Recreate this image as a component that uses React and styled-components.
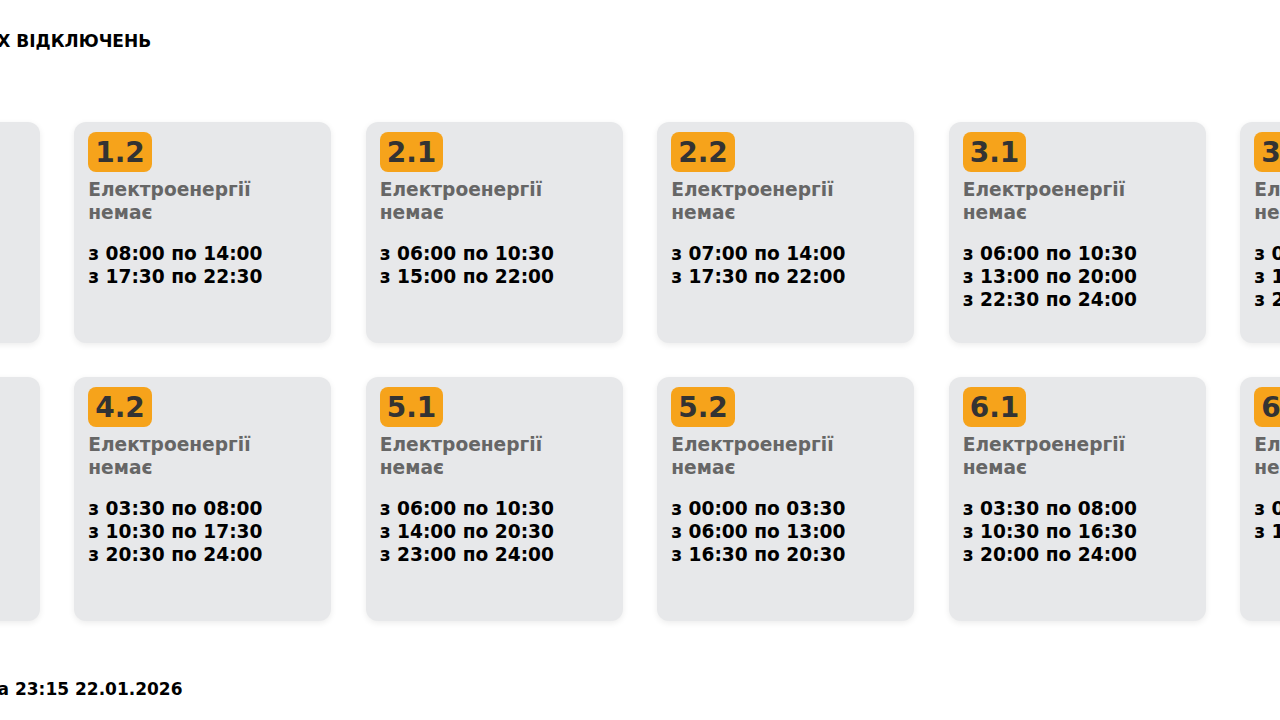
import React from "react";
import styled, { createGlobalStyle } from "styled-components";

const Global = createGlobalStyle`
  html, body { margin: 0; padding: 0; background: #ffffff; overflow-x: hidden; }
  body { font-family: "DejaVu Sans", "Noto Sans", sans-serif; color: #000; }
`;

const Page = styled.div`
  display: flex;
  justify-content: center;
  width: 100%;
  overflow: hidden;
`;

const Content = styled.main`
  flex-shrink: 0;
  width: 1714.5px;
  padding: 31px 0 20px;
  display: flex;
  flex-direction: column;
`;

const Title = styled.h1`
  margin: 0 0 70px;
  padding-left: 9px;
  font-size: 17px;
  line-height: 21px;
  font-weight: 700;
  text-transform: uppercase;
  color: #000;
`;

const Grid = styled.section`
  display: grid;
  grid-template-columns: repeat(6, 257px);
  column-gap: 34.5px;
  row-gap: 34px;
`;

const Card = styled.article`
  background: #e7e8ea;
  border-radius: 12px;
  box-shadow: 0 2px 6px rgba(0, 0, 0, 0.08);
  padding: 10px 14px 14px;
  display: flex;
  flex-direction: column;
  align-items: flex-start;
`;

const Badge = styled.div`
  background: #f6a31b;
  color: #333333;
  border-radius: 8px;
  padding: 1px 7px 0;
  height: 40px;
  box-sizing: border-box;
  line-height: 39px;
  font-size: 28px;
  font-weight: 700;
  margin-bottom: 6px;
`;

const Status = styled.p`
  margin: 0 0 18px;
  font-size: 18.6px;
  line-height: 23px;
  font-weight: 700;
  color: #666666;
`;

const Times = styled.div`
  margin-bottom: 18px;
  font-size: 18.6px;
  line-height: 23px;
  font-weight: 700;
  color: #000;
`;

const Footer = styled.p`
  margin: 58px 0 0;
  padding-left: 9px;
  font-size: 17px;
  line-height: 21px;
  font-weight: 700;
`;

const groups = [
  { id: "1.1", times: [["00:00", "03:30"], ["10:00", "14:00"], ["17:30", "21:00"]] },
  { id: "1.2", times: [["08:00", "14:00"], ["17:30", "22:30"]] },
  { id: "2.1", times: [["06:00", "10:30"], ["15:00", "22:00"]] },
  { id: "2.2", times: [["07:00", "14:00"], ["17:30", "22:00"]] },
  { id: "3.1", times: [["06:00", "10:30"], ["13:00", "20:00"], ["22:30", "24:00"]] },
  { id: "3.2", times: [["00:00", "03:30"], ["10:30", "17:00"], ["20:30", "24:00"]] },
  { id: "4.1", times: [["00:00", "03:30"], ["07:00", "10:30"], ["13:30", "17:30"], ["21:00", "24:00"]] },
  { id: "4.2", times: [["03:30", "08:00"], ["10:30", "17:30"], ["20:30", "24:00"]] },
  { id: "5.1", times: [["06:00", "10:30"], ["14:00", "20:30"], ["23:00", "24:00"]] },
  { id: "5.2", times: [["00:00", "03:30"], ["06:00", "13:00"], ["16:30", "20:30"]] },
  { id: "6.1", times: [["03:30", "08:00"], ["10:30", "16:30"], ["20:00", "24:00"]] },
  { id: "6.2", times: [["00:00", "06:30"], ["13:00", "20:00"]] },
];

export default function App() {
  return (
    <>
      <Global />
      <Page>
        <Content>
          <Title>Графік погодинних відключень</Title>
          <Grid>
            {groups.map((g) => (
              <Card key={g.id}>
                <Badge>{g.id}</Badge>
                <Status>
                  Електроенергії
                  <br />
                  немає
                </Status>
                <Times>
                  {g.times.map(([a, b]) => (
                    <div key={a}>
                      з {a} по {b}
                    </div>
                  ))}
                </Times>
              </Card>
            ))}
          </Grid>
          <Footer>Інформація станом на 23:15 22.01.2026</Footer>
        </Content>
      </Page>
    </>
  );
}
